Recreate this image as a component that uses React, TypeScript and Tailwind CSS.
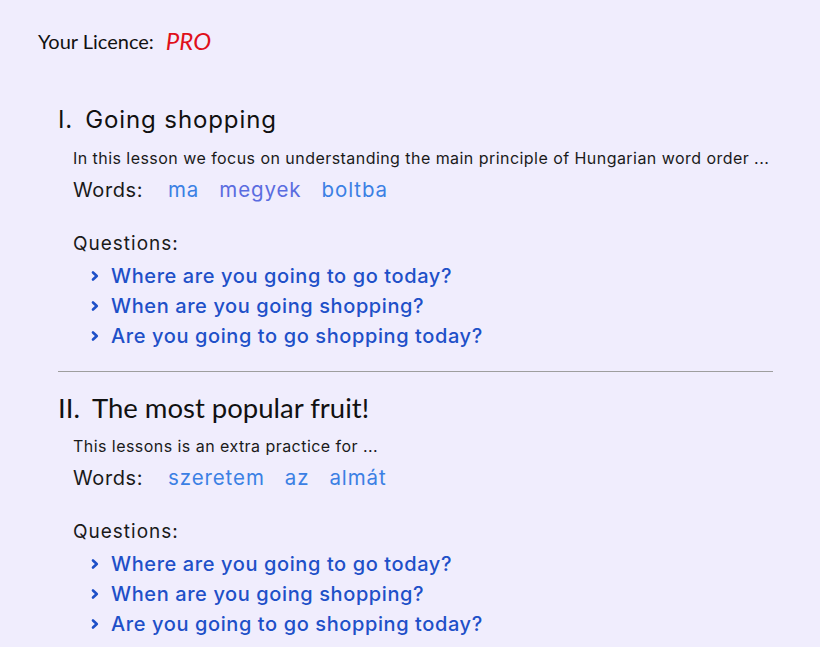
import React from "react";

type Lesson = {
  num: string;
  title: string;
  titleFont: "geo" | "narrow";
  description: string;
  words: { text: string; visited?: boolean }[];
  questions: string[];
};

const lessons: Lesson[] = [
  {
    num: "I.",
    title: "Going shopping",
    titleFont: "geo",
    description:
      "In this lesson we focus on understanding the main principle of Hungarian word order ...",
    words: [{ text: "ma" }, { text: "megyek", visited: true }, { text: "boltba" }],
    questions: [
      "Where are you going to go today?",
      "When are you going shopping?",
      "Are you going to go shopping today?",
    ],
  },
  {
    num: "II.",
    title: "The most popular fruit!",
    titleFont: "narrow",
    description: "This lessons is an extra practice for ...",
    words: [{ text: "szeretem" }, { text: "az" }, { text: "almát" }],
    questions: [
      "Where are you going to go today?",
      "When are you going shopping?",
      "Are you going to go shopping today?",
    ],
  },
];

const geo = "font-['Inter',sans-serif]";
const narrow = "font-['Lato',sans-serif]";

const Chevron = () => (
  <svg width="10" height="12" viewBox="0 0 10 12" className="shrink-0">
    <path d="M3 2.5 L6.8 6 L3 9.5" fill="none" stroke="#1e50c8" strokeWidth="2.6" strokeLinecap="round" strokeLinejoin="round" />
  </svg>
);

const LessonBlock = ({ lesson }: { lesson: Lesson }) => (
  <div className="py-5">
    <h2
      className={`flex h-8 items-center text-[#111] ${
        lesson.titleFont === "geo"
          ? `${geo} gap-[12px] text-[24px] tracking-[0.9px]`
          : `${narrow} gap-[12px] text-[27.5px]`
      }`}
    >
      <span>{lesson.num}</span>
      <span>{lesson.title}</span>
    </h2>
    <div className={`${geo} ml-[15px] text-[#1a1a1a]`}>
      <p className="mt-[10px] h-6 text-[16px] leading-6 tracking-[0.45px]">{lesson.description}</p>
      <div className="mt-[6px] flex h-7 items-center text-[20px] tracking-[0.6px]">
        <span className="w-[95px]">Words:</span>
        <div className="flex gap-5 text-[20.5px] tracking-[0.9px]">
          {lesson.words.map((w) => (
            <span key={w.text} className={w.visited ? "text-[#5a6ce0]" : "text-[#3b80e4]"}>
              {w.text}
            </span>
          ))}
        </div>
      </div>
      <p className="mt-[26px] h-7 text-[19px] leading-7 tracking-[1px]">Questions:</p>
      <ul className="mt-[3px] ml-[17px]">
        {lesson.questions.map((q) => (
          <li
            key={q}
            className="flex h-[30px] items-center gap-[11px] text-[20px] font-medium tracking-[0.6px] text-[#1e50c8]"
          >
            <Chevron />
            <span>{q}</span>
          </li>
        ))}
      </ul>
    </div>
  </div>
);

export default function App() {
  return (
    <div className="min-h-screen bg-[#f0edfd] px-[38px] pt-[27px]">
      <div className={`${narrow} flex h-7 items-center gap-3 text-[20px] text-[#111]`}>
        <span>Your Licence:</span>
        <span className="text-[24px] italic text-[#e0101a]">PRO</span>
      </div>
      <div className="ml-5 mt-[29px] w-[715px]">
        {lessons.map((l, i) => (
          <React.Fragment key={l.num}>
            {i > 0 && <hr className="border-t border-[#9e9e9e]" />}
            <LessonBlock lesson={l} />
          </React.Fragment>
        ))}
      </div>
    </div>
  );
}
